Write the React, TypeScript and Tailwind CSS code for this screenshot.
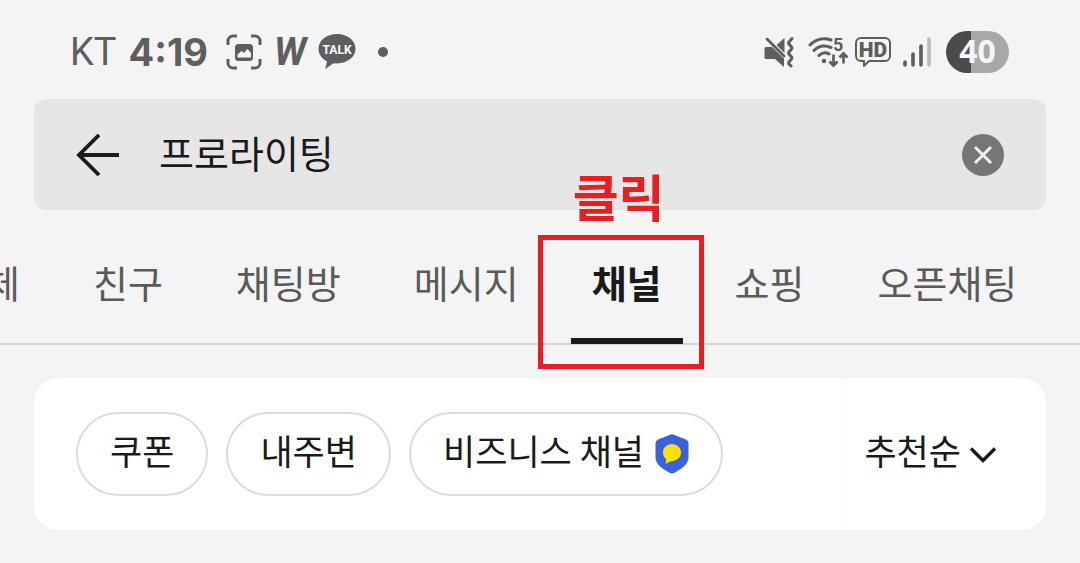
import { useState } from "react";

const TABS = ["전체", "친구", "채팅방", "메시지", "채널", "쇼핑", "오픈채팅"];

function StatusBar() {
  return (
    <header className="flex h-[99px] items-center justify-between pt-[5px] pr-[71px] pl-[70px] text-[#5e5e5e]">
      <div className="flex items-center">
        <span className="font-['Roboto',sans-serif] text-[38px] leading-none">KT</span>
        <span className="ml-3 font-['Inter',sans-serif] text-[38px] leading-none font-bold">4:19</span>
        <svg className="ml-[18px] size-9" viewBox="0 0 36 36" fill="none" aria-hidden="true">
          <path
            d="M2 11V7a5 5 0 0 1 5-5h4M25 2h4a5 5 0 0 1 5 5v4M34 25v4a5 5 0 0 1-5 5h-4M11 34H7a5 5 0 0 1-5-5v-4"
            stroke="currentColor"
            strokeWidth="3"
          />
          <rect x="9" y="10" width="18" height="17" rx="3.5" fill="currentColor" />
          <path d="M11.500 23.500v-3l4-3.500 2.500 2 3.500-4 3.500 4v4.500z" fill="#f4f4f4" />
        </svg>
        <span className="ml-3 font-['Roboto',sans-serif] text-[38px] leading-none font-bold italic">W</span>
        <svg className="ml-3 h-9 w-[38px]" viewBox="0 0 38 36" aria-hidden="true">
          <path
            d="M19 0C8.500 0 .5 6.600.5 14.800c0 5.400 3.400 10 8.500 12.600L7.200 35l8.300-5.800c1.100.2 2.300.2 3.500.2 10.500 0 18.500-6.500 18.500-14.600S29.500 0 19 0z"
            fill="currentColor"
          />
          <text x="19" y="20" textAnchor="middle" className="fill-[#f4f4f4] font-['Roboto',sans-serif] text-[12px] font-extrabold">
            TALK
          </text>
        </svg>
        <span className="ml-[22px] size-2.5 rounded-full bg-[#5e5e5e]" />
      </div>

      <div className="flex items-center">
        <svg className="h-8 w-8" viewBox="0 0 32 32" fill="none" aria-hidden="true">
          <path d="M2 11h6l12 11.500V31l-9-8H2a1.500 1.500 0 0 1-1.500-1.500v-9A1.500 1.500 0 0 1 2 11z" fill="currentColor" />
          <path d="M20.500 2v15l-8-8z" fill="currentColor" />
          <path d="M3 3l17 17" stroke="currentColor" strokeWidth="2.800" strokeLinecap="round" />
          <path
            d="M28 2.500l-3 3.500q-.8 1 0 2l2.500 3q.8 1 0 2L25 16q-.8 1 0 2l2.500 3q.8 1 0 2L25 26q-.6 1 0 2l2 2"
            stroke="currentColor"
            strokeWidth="3"
            strokeLinecap="round"
            strokeLinejoin="round"
          />
        </svg>
        <svg className="ml-3 h-8 w-10" viewBox="0 0 40 32" fill="none" aria-hidden="true">
          <path
            d="M2 9C8 3 16 1.500 23 4M6 14.500c4.500-4.500 11-5.500 17-3M11 19.500c3-3 7-3.500 10-1.500"
            stroke="currentColor"
            strokeWidth="3"
            strokeLinecap="round"
          />
          <circle cx="16" cy="25" r="2.200" fill="currentColor" />
          <path
            d="M25.500 18.500v11M21.500 25.500l4 4 4-4M35.500 27.500V17.500M31.500 21.500l4-4 4 4"
            stroke="currentColor"
            strokeWidth="2.700"
          />
          <text x="25" y="15" className="fill-current font-['Roboto',sans-serif] text-[18px] font-bold">
            5
          </text>
        </svg>
        <svg className="ml-[7px] h-8 w-9" viewBox="0 0 36 32" fill="none" aria-hidden="true">
          <path
            d="M6 2h24a5 5 0 0 1 5 5v13a5 5 0 0 1-5 5H14l-5 5v-5H6a5 5 0 0 1-5-5V7a5 5 0 0 1 5-5z"
            stroke="currentColor"
            strokeWidth="2"
            strokeLinejoin="round"
          />
          <text x="18" y="21" textAnchor="middle" className="fill-current font-['Roboto',sans-serif] text-[21px] font-black">
            HD
          </text>
        </svg>
        <svg className="ml-3 h-8 w-[29px]" viewBox="0 0 29 32" fill="none" strokeWidth="3.600" strokeLinecap="round" aria-hidden="true">
          <path d="M2 26v3M10 18v11M18 10v19" stroke="currentColor" />
          <path d="M26 3v26" stroke="#bcbcbc" />
        </svg>
        <span className="ml-3.5 flex h-[42px] w-[63px] items-center justify-center rounded-full bg-linear-to-r from-[#4b4b4b] from-40% to-[#a8a8a8] to-40% pb-0.5 font-['Open_Sans',sans-serif] text-[32px] leading-none font-bold text-[#f6f6f6]">
          40
        </span>
      </div>
    </header>
  );
}

function SearchBar() {
  const [query, setQuery] = useState("프로라이팅");
  return (
    <form className="mx-[34px] flex h-[111px] items-center rounded-xl bg-[#e6e6e6] px-[42px]" onSubmit={(e) => e.preventDefault()}>
      <button type="button" aria-label="뒤로" className="shrink-0">
        <svg className="h-[42px] w-[43px]" viewBox="0 0 43 42" fill="none" stroke="#1a1a1a" strokeWidth="3.800" aria-hidden="true">
          <path d="M43 21H3.500M23 1L3 21l20 20" />
        </svg>
      </button>
      <input
        aria-label="검색"
        className="ml-10 min-w-0 flex-1 bg-transparent pb-1.5 text-[38px] leading-[56px] text-[#1a1a1a] outline-none"
        value={query}
        onChange={(e) => setQuery(e.target.value)}
      />
      <button type="button" aria-label="지우기" className="shrink-0" onClick={() => setQuery("")}>
        <svg className="size-[42px]" viewBox="0 0 42 42" fill="none" aria-hidden="true">
          <circle cx="21" cy="21" r="21" fill="#767676" />
          <path d="M13 13l16 16M29 13L13 29" stroke="#f0f0f0" strokeWidth="3" />
        </svg>
      </button>
    </form>
  );
}

function ClickCallout() {
  return (
    <span className="pointer-events-none absolute top-[25px] -left-[33px] h-[134px] w-[166px] border-5 border-[#e91e25]">
      <span className="absolute -top-20 left-[30px] text-[50px] leading-[70px] font-bold whitespace-nowrap text-[#e91e25]">클릭</span>
    </span>
  );
}

function Tabs() {
  const [active, setActive] = useState("채널");
  return (
    <nav className="border-b-2 border-[#d6d6d6]">
      <div className="-ml-[71px] flex h-[133px] gap-[31px]">
        {TABS.map((tab) => (
          <div key={tab} className="relative flex shrink-0">
            <button
              type="button"
              onClick={() => setActive(tab)}
              className={
                tab === active
                  ? "-mb-px border-b-6 border-[#1a1a1a] px-[21px] pt-4 text-[38px] leading-[56px] font-bold text-[#1a1a1a]"
                  : "-mb-px border-b-6 border-transparent px-[21px] pt-4 text-[38px] leading-[56px] text-[#5a5a5a]"
              }
            >
              {tab}
            </button>
            {tab === "채널" && <ClickCallout />}
          </div>
        ))}
      </div>
    </nav>
  );
}

function Filters() {
  const chip = "flex h-[84px] items-center gap-[11px] rounded-full border-2 border-[#dcdcdc] px-8 pb-2";
  return (
    <section className="mx-[34px] mt-[33px] flex h-[152px] items-center justify-between rounded-3xl bg-white pl-[42px] text-[35px] leading-[50px] text-[#1a1a1a] shadow-[0_0_6px_rgba(0,0,0,0.02)]">
      <div className="flex gap-[18px]">
        <button type="button" className={chip}>쿠폰</button>
        <button type="button" className={chip}>내주변</button>
        <button type="button" className={chip}>
          비즈니스 채널
          <svg className="mt-2 h-10 w-[34px]" viewBox="0 0 34 40" aria-hidden="true">
            <path
              d="M14.500 1Q17-.5 19.500 1L31 5.500Q33.500 6.500 33.500 9v14c0 5-3 8.500-7 11.500l-6.500 4q-3 1.800-6 0L7.500 34.500c-4-3-7-6.500-7-11.500V9Q.5 6.500 3 5.500z"
              fill="#3b62dc"
            />
            <path
              d="M17 10c-5 0-9 3.600-9 8.400 0 3 1.300 5.300 3.200 6.800l-.6 4.600 5.400-2.600c5.600 0 10-3.900 10-8.800 0-4.800-4-8.400-9-8.400z"
              fill="#fbe104"
            />
          </svg>
        </button>
      </div>
      <button type="button" className="flex h-full items-center gap-2 border-l-2 border-[#fcfcfc] pr-[49px] pb-2 pl-[18px]">
        추천순
        <svg className="mt-2.5 h-[18px] w-7" viewBox="0 0 28 18" fill="none" stroke="#1a1a1a" strokeWidth="3.400" aria-hidden="true">
          <path d="M2 2.500l12 12 12-12" />
        </svg>
      </button>
    </section>
  );
}

export default function App() {
  return (
    <main className="min-h-screen overflow-hidden bg-[#f4f4f4] font-['Noto_Sans_CJK_KR',sans-serif]">
      <StatusBar />
      <SearchBar />
      <Tabs />
      <Filters />
    </main>
  );
}
